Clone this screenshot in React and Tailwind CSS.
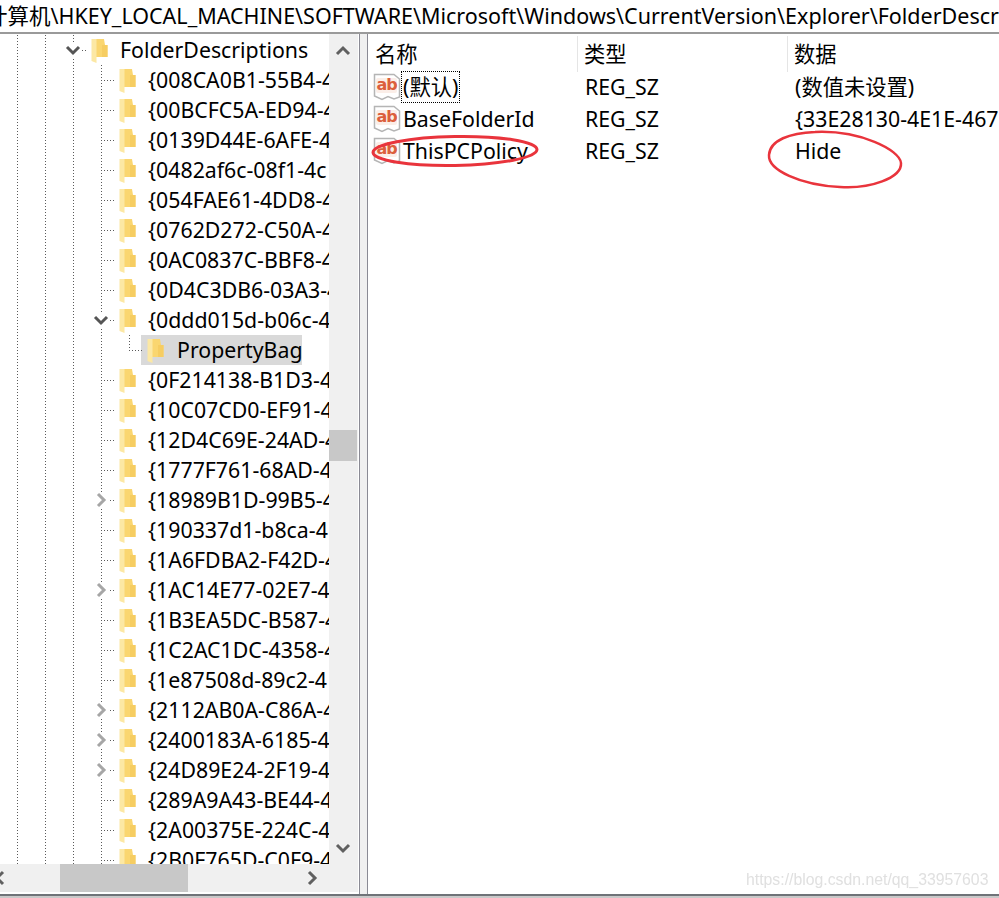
const dots = "bg-[repeating-linear-gradient(to_bottom,#5a5a5a_0_1px,transparent_1px_3px)]";
const dotsH = "bg-[repeating-linear-gradient(to_right,#5a5a5a_0_1px,transparent_1px_3px)]";

const rows = [
  { depth: 0, label: "FolderDescriptions", exp: "down" },
  { depth: 1, label: "{008CA0B1-55B4-4" },
  { depth: 1, label: "{00BCFC5A-ED94-4" },
  { depth: 1, label: "{0139D44E-6AFE-4" },
  { depth: 1, label: "{0482af6c-08f1-4c" },
  { depth: 1, label: "{054FAE61-4DD8-4" },
  { depth: 1, label: "{0762D272-C50A-4" },
  { depth: 1, label: "{0AC0837C-BBF8-4" },
  { depth: 1, label: "{0D4C3DB6-03A3-4" },
  { depth: 1, label: "{0ddd015d-b06c-4", exp: "down" },
  { depth: 2, label: "PropertyBag", selected: true },
  { depth: 1, label: "{0F214138-B1D3-4" },
  { depth: 1, label: "{10C07CD0-EF91-4" },
  { depth: 1, label: "{12D4C69E-24AD-4" },
  { depth: 1, label: "{1777F761-68AD-4" },
  { depth: 1, label: "{18989B1D-99B5-4", exp: "right" },
  { depth: 1, label: "{190337d1-b8ca-4" },
  { depth: 1, label: "{1A6FDBA2-F42D-4" },
  { depth: 1, label: "{1AC14E77-02E7-4", exp: "right" },
  { depth: 1, label: "{1B3EA5DC-B587-4" },
  { depth: 1, label: "{1C2AC1DC-4358-4" },
  { depth: 1, label: "{1e87508d-89c2-4" },
  { depth: 1, label: "{2112AB0A-C86A-4", exp: "right" },
  { depth: 1, label: "{2400183A-6185-4", exp: "right" },
  { depth: 1, label: "{24D89E24-2F19-4", exp: "right" },
  { depth: 1, label: "{289A9A43-BE44-4" },
  { depth: 1, label: "{2A00375E-224C-4" },
  { depth: 1, label: "{2B0F765D-C0F9-4" },
];

const values = [
  { name: "(默认)", data: "(数值未设置)", focus: true },
  { name: "BaseFolderId", data: "{33E28130-4E1E-4676-835A-98395C3BC3BB}" },
  { name: "ThisPCPolicy", data: "Hide" },
];

function Chevron({ dir, className }) {
  const points = {
    down: "2,5 8,11 14,5",
    up: "2,11 8,5 14,11",
    right: "5,2 11,8 5,14",
    left: "11,2 5,8 11,14",
  }[dir];
  return (
    <svg width="16" height="16" viewBox="0 0 16 16" className={className}>
      <polyline points={points} fill="none" stroke="currentColor" strokeWidth="3" />
    </svg>
  );
}

function Folder() {
  return (
    <svg width="17" height="26" viewBox="0 0 17 26" className="shrink-0">
      <path d="M5 2 H13 L14 8 H16.5 V20 H5 Z" fill="#fad670" />
      <path d="M11 8 H16.5 V20 H11 Z" fill="#f6cd62" />
      <path d="M0.5 2 L5.5 2 V26 L0.5 24 Z" fill="#fce8a4" />
    </svg>
  );
}

function ValueIcon() {
  return (
    <svg width="28" height="30" viewBox="0 0 28 30" className="shrink-0">
      <path d="M1.5 2.5 H21 L26.5 7 V25 L21 27 L15 24.5 L9 27.5 L1.5 24 Z" fill="#fff" stroke="#b5b5b5" strokeWidth="1.5" />
      <rect x="3" y="6" width="21" height="15" rx="2" fill="#fbeee8" />
      <text x="13.5" y="18" textAnchor="middle" fontSize="16" fontWeight="700" fontFamily="'DejaVu Sans', sans-serif" fill="#dc5f3c" letterSpacing="-1">ab</text>
    </svg>
  );
}

function Guide() {
  return (
    <div className="w-[28px] h-full shrink-0">
      <div className={`w-px h-full ${dots}`} />
    </div>
  );
}

function TreeRow({ depth, label, exp, selected }) {
  const guides = Array.from({ length: depth + 2 });
  return (
    <div className="flex items-center h-[30px] pl-[17px] whitespace-nowrap">
      {guides.map((_, i) => (
        <Guide key={i} />
      ))}
      <div className="relative w-[18px] h-full shrink-0 flex items-center">
        <div className={`absolute left-0 top-0 w-px ${depth === 2 ? "h-[15px]" : "h-full"} ${dots}`} />
        <div className={`w-[15px] h-px ${dotsH}`} />
        {exp && (
          <div className={`absolute left-[-8px] top-[7px] bg-white ${exp === "down" ? "text-[#555]" : "text-[#a6a6a6]"}`}>
            <Chevron dir={exp} />
          </div>
        )}
      </div>
      {selected ? (
        <div className="flex items-center h-full bg-[#d9d9d9] pl-[6px] ml-[-6px] w-[161px]">
          <Folder />
          <span className="ml-[13px]">{label}</span>
        </div>
      ) : (
        <>
          <Folder />
          <span className="ml-[12px]">{label}</span>
        </>
      )}
    </div>
  );
}

export default function App() {
  return (
    <div className="relative w-[999px] h-[898px] overflow-hidden bg-white text-black text-[21.3px] font-['Noto_Sans','Noto_Sans_CJK_SC',sans-serif] flex flex-col">
      {/* address bar */}
      <div className="h-[32px] shrink-0 flex items-center whitespace-nowrap overflow-hidden text-[21.5px]">
        <span className="ml-[-14px]">计算机\HKEY_LOCAL_MACHINE\SOFTWARE\Microsoft\Windows\CurrentVersion\Explorer\FolderDescriptions</span>
      </div>
      <div className="h-[2px] shrink-0 bg-[#9a9a9a]" />

      {/* main */}
      <div className="flex h-[860px] shrink-0">
        {/* tree pane */}
        <div className="w-[359px] shrink-0 flex flex-col">
          <div className="flex h-[830px] shrink-0">
            <div className="w-[329px] shrink-0 overflow-hidden pt-px">
              {rows.map((r) => (
                <TreeRow key={r.label} {...r} />
              ))}
            </div>
            <div className="w-[29px] shrink-0 bg-[#f0f0f0] flex flex-col items-center text-[#606060]">
              <Chevron dir="up" className="mt-[9px] mr-px" />
              <div className="h-[371px] shrink-0" />
              <div className="w-[28px] h-[31px] shrink-0 mr-px bg-[#c8c8c8]" />
              <div className="flex-1" />
              <Chevron dir="down" className="mb-[8px] mr-px" />
            </div>
          </div>
          <div className="relative w-[358px] h-[28px] shrink-0 bg-[#f0f0f0] flex items-center text-[#606060]">
            <Chevron dir="left" className="ml-[-8px]" />
            <div className="ml-[52px] w-[128px] h-full bg-[#c8c8c8]" />
            <Chevron dir="right" className="ml-[116px]" />
          </div>
        </div>

        {/* splitter */}
        <div className="w-[9px] shrink-0 bg-[#f0f0f0] border-x border-[#8a8a94]" />

        {/* value list */}
        <div className="flex-1 min-w-0 overflow-hidden whitespace-nowrap">
          <div className="flex h-[36px] mt-[2px] mb-[-1px] items-center">
            <div className="w-[210px] h-full shrink-0 pl-[7px] border-r border-[#e5e5e5] flex items-center">名称</div>
            <div className="w-[210px] h-full shrink-0 pl-[6px] border-r border-[#e5e5e5] flex items-center">类型</div>
            <div className="pl-[6px]">数据</div>
          </div>
          {values.map((v) => (
            <div key={v.name} className="flex items-center h-[32px]">
              <div className="w-[210px] shrink-0 flex items-center pl-[5px]">
                <ValueIcon />
                <span className={`ml-[1px] px-[1px] leading-[30px] ${v.focus ? "outline-1 outline-dotted outline-black" : ""}`}>{v.name}</span>
              </div>
              <div className="w-[210px] shrink-0 pl-[7px]">REG_SZ</div>
              <div className="pl-[7px]">{v.data}</div>
            </div>
          ))}
        </div>
      </div>

      <div className="h-[2px] shrink-0 bg-[#6f7378]" />
      <div className="h-[2px] shrink-0 bg-[#c9c9c9]" />

      {/* annotations drawn over the screenshot */}
      <svg width="999" height="898" viewBox="0 0 999 898" className="absolute left-0 top-0 pointer-events-none">
        <ellipse cx="455" cy="151" rx="82" ry="14.5" fill="none" stroke="#e9343c" strokeWidth="3" transform="rotate(-1 455 151)" />
        <path d="M815 132 C860 130 900 150 901 163 C902 178 870 189 840 187 C800 185 768 170 769 155 C770 140 790 133 815 132" fill="none" stroke="#e9343c" strokeWidth="2.5" />
      </svg>
      <div className="absolute left-[746px] top-[870px] text-[15.8px] leading-[20px] text-[#e0e0e0] blur-[0.4px] font-['Liberation_Sans',sans-serif]">https://blog.csdn.net/qq_33957603</div>
    </div>
  );
}
